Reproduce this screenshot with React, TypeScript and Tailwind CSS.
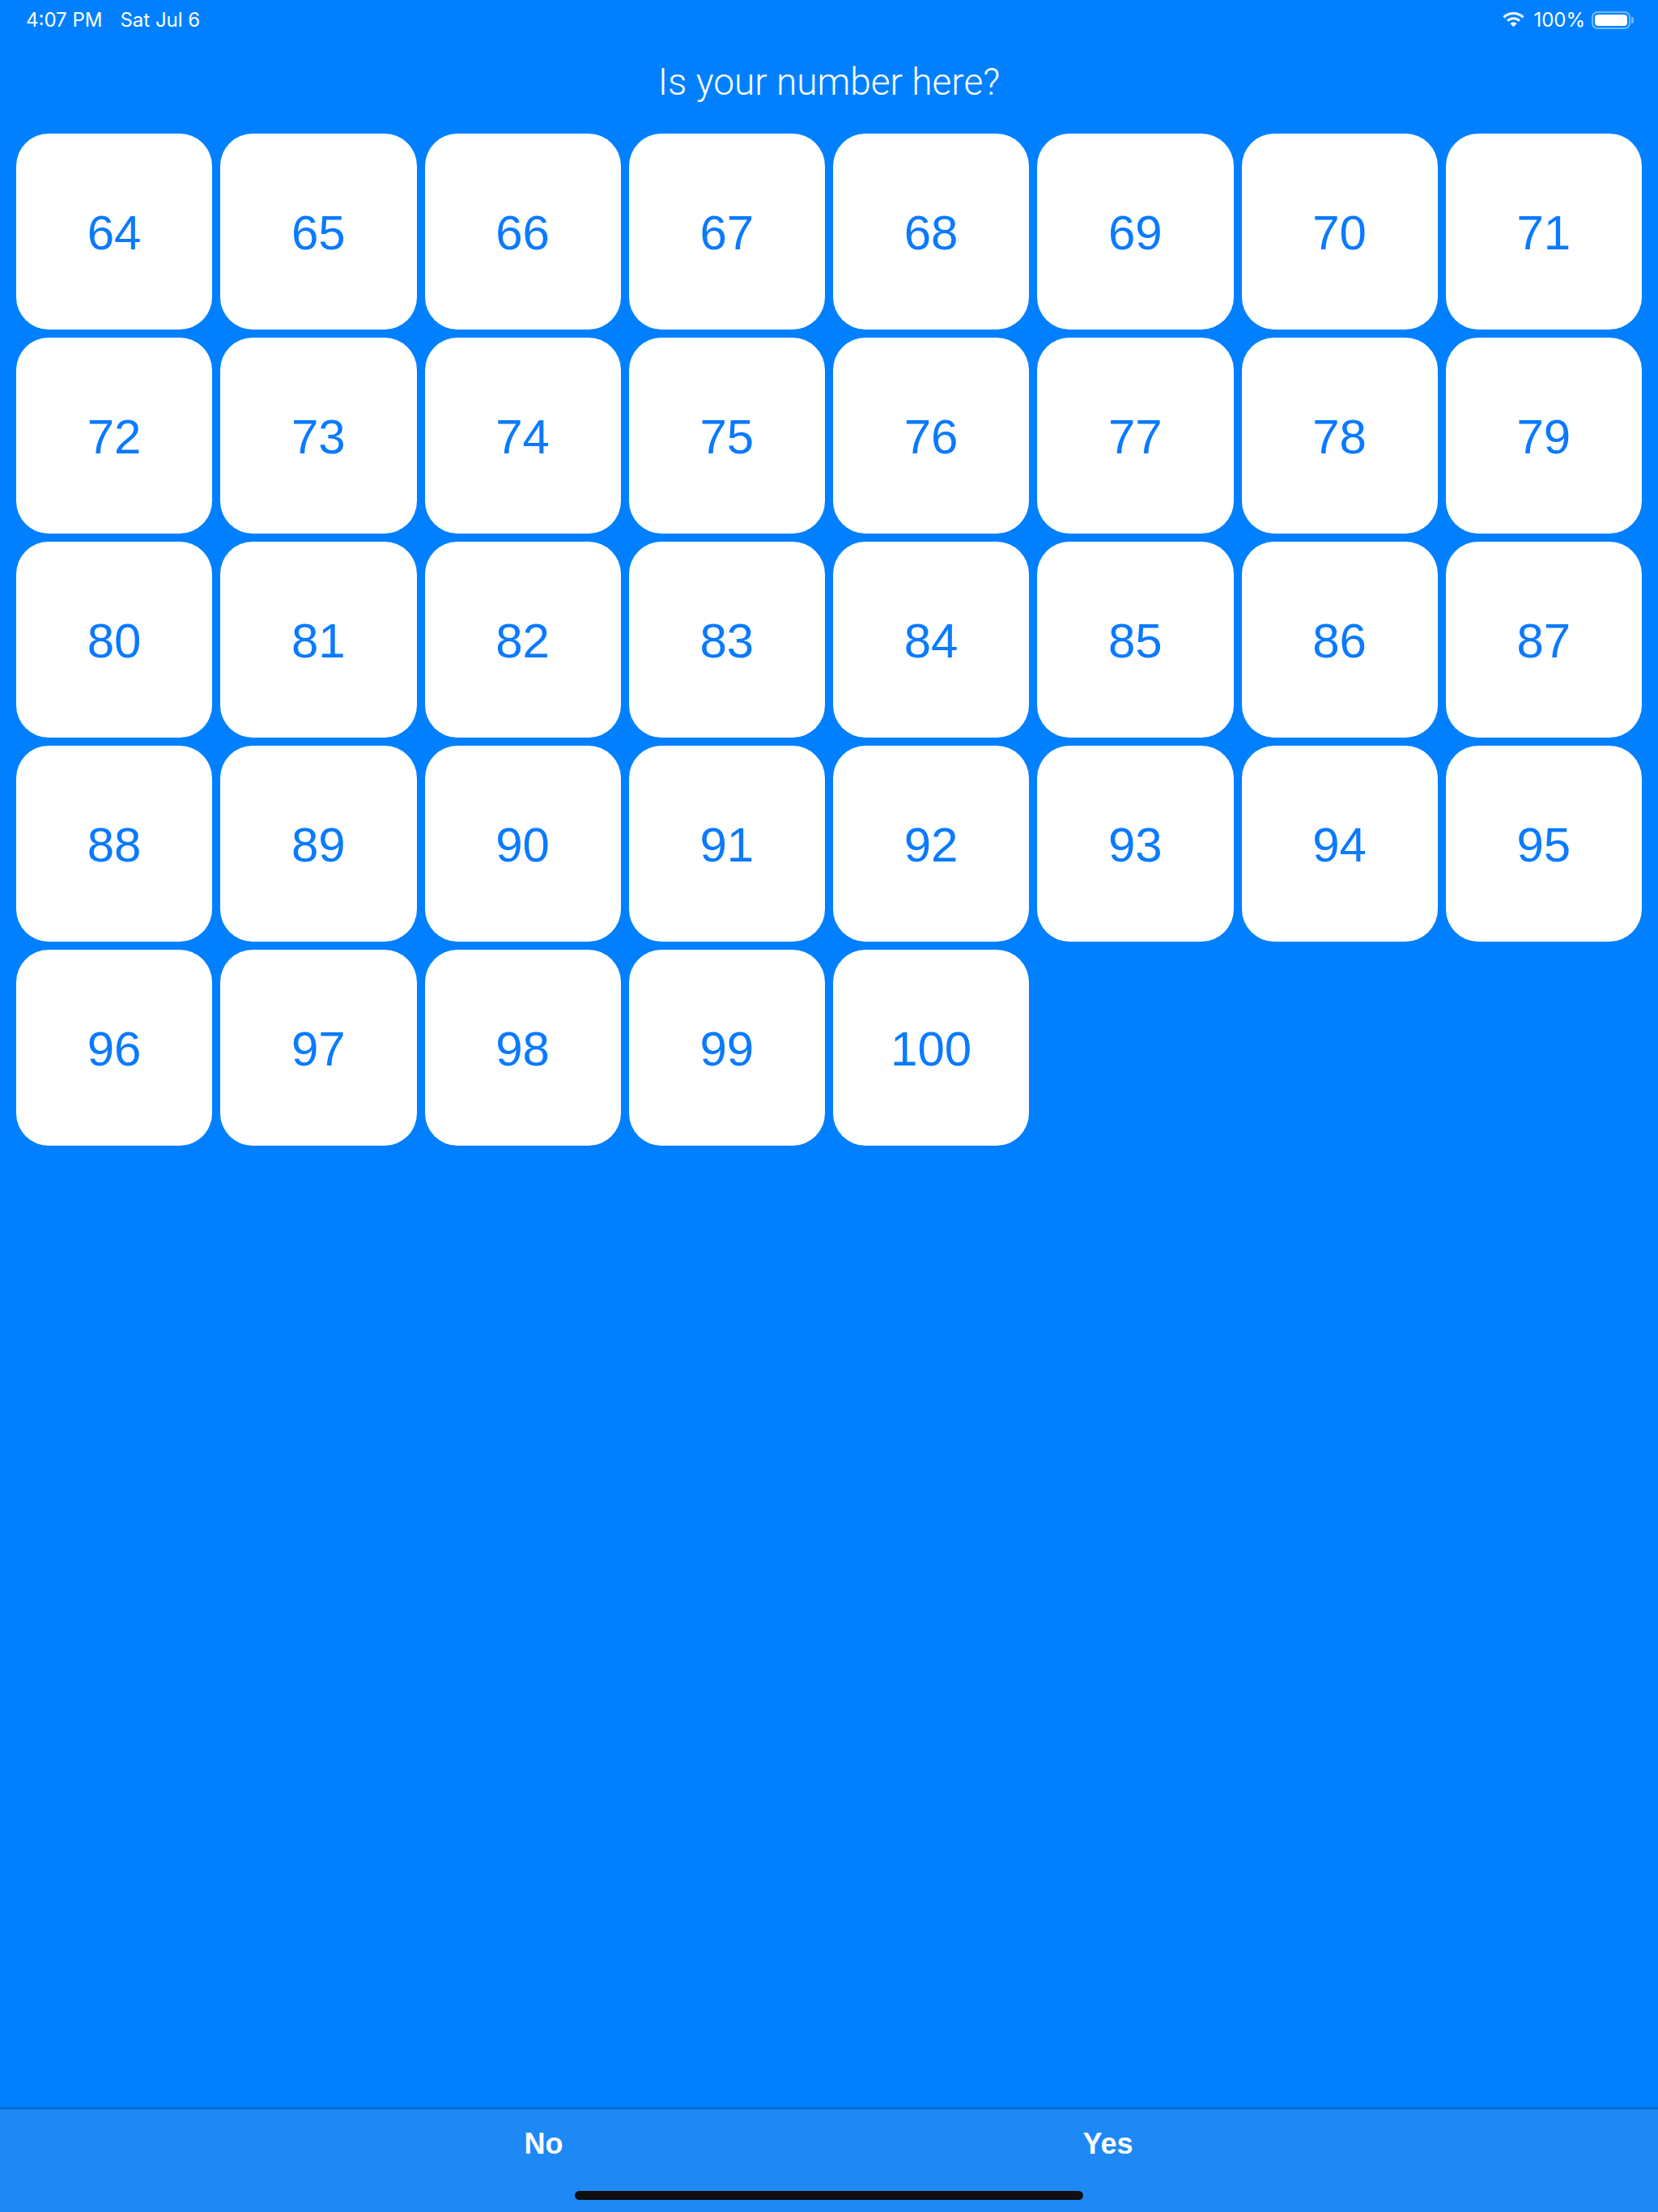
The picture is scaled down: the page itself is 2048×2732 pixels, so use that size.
import React from "react";

const numbers = Array.from({ length: 37 }, (_, i) => 64 + i);

function Wifi() {
  return (
    <svg width="27" height="19" viewBox="0 0 27 19" fill="white">
      <path d="M13.5 0C8.4 0 3.8 2 0.4 5.3l2.1 2.2C5.3 4.8 9.2 3.1 13.5 3.1s8.2 1.7 11 4.4l2.1-2.2C23.2 2 18.6 0 13.5 0z" />
      <path d="M13.5 6.2c-3.3 0-6.3 1.3-8.5 3.4l2.2 2.2c1.6-1.5 3.800-2.5 6.3-2.5s4.7 1 6.3 2.5l2.2-2.2c-2.2-2.1-5.2-3.4-8.5-3.4z" />
      <path d="M13.5 12.4c-1.6 0-3 0.6-4.1 1.6l4.1 4.3 4.1-4.3c-1.1-1-2.5-1.6-4.1-1.6z" />
    </svg>
  );
}

export default function App() {
  return (
    <div className="relative flex min-h-[2732px] w-[2048px] flex-col bg-[#0080ff] font-['Liberation_Sans',Arial,sans-serif]">
      {/* status bar */}
      <div className="flex h-[46px] items-center justify-between pl-[32px] pr-[30px] pt-[3px] font-['Inter',sans-serif] text-[24px] text-white">
        <div className="flex items-center gap-[22px]">
          <span>4:07 PM</span>
          <span>Sat Jul 6</span>
        </div>
        <div className="flex items-center">
          <Wifi />
          <span className="ml-[11px]">100%</span>
          <div className="ml-[8px] flex items-center">
            <div className="flex h-[22px] w-[48px] items-center rounded-[7px] border-[2px] border-white/45 p-[2px]">
              <div className="h-full w-full rounded-[4px] bg-white" />
            </div>
            <div className="ml-[1px] h-[8px] w-[3px] rounded-r-[2px] bg-white/45" />
          </div>
        </div>
      </div>

      {/* title */}
      <div className="pt-[32px] text-center font-['Roboto',sans-serif] text-[46px] font-light leading-none text-white">
        Is your number here?
      </div>

      {/* grid */}
      <div className="mt-[41px] grid grid-cols-8 gap-[10px] px-[20px]">
        {numbers.map((n) => (
          <div
            key={n}
            className="flex h-[242px] items-center justify-center rounded-[40px] bg-white pt-[4px] text-[60px] leading-none text-[#0a7aff]"
          >
            {n}
          </div>
        ))}
      </div>

      <div className="flex-1" />

      {/* bottom bar */}
      <div className="relative h-[129px] border-t-[2px] border-[#0b63c4] bg-[#1e88f5]">
        <div className="flex justify-center pr-[8px] pt-[25px] text-[36px] font-bold leading-none text-white">
          <div className="w-[697px] text-center">No</div>
          <div className="w-[697px] text-center">Yes</div>
        </div>
        <div className="absolute bottom-[15px] left-[710px] h-[11px] w-[628px] rounded-full bg-[#0f0f0f]" />
      </div>
    </div>
  );
}
